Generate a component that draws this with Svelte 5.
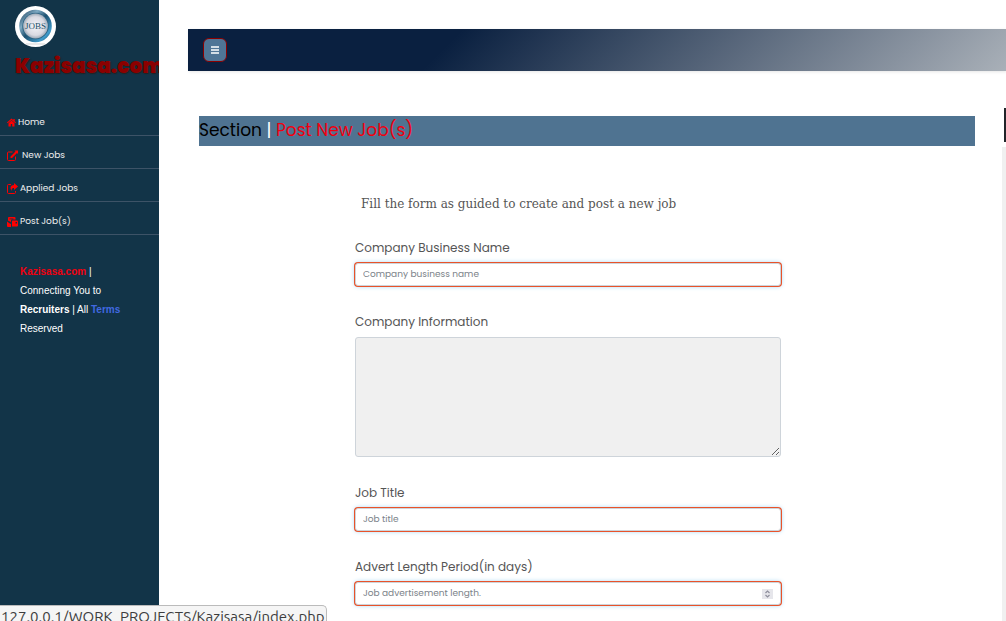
<script>
  const links = [
    { icon: 'home', label: 'Home', gap: 2 },
    { icon: 'edit', label: 'New Jobs', gap: 4 },
    { icon: 'share', label: 'Applied Jobs', gap: 2 },
    { icon: 'mail', label: 'Post Job(s)', gap: 2 }
  ];
</script>

<div class="shell">
  <aside class="sidebar">
    <div class="brand">
      <svg class="logo" viewBox="0 0 41 41" role="img" aria-label="Jobs">
        <defs>
          <linearGradient id="ring" x1="0" y1="0" x2="1" y2="1">
            <stop offset="0" stop-color="#12344f" />
            <stop offset=".3" stop-color="#7fabc4" />
            <stop offset=".5" stop-color="#1d506f" />
            <stop offset=".8" stop-color="#3f9bcb" />
            <stop offset="1" stop-color="#0e3650" />
          </linearGradient>
          <radialGradient id="face">
            <stop offset="0" stop-color="#f4f4f8" />
            <stop offset=".75" stop-color="#d9dae2" />
            <stop offset="1" stop-color="#9eabb9" />
          </radialGradient>
        </defs>
        <circle cx="20.5" cy="20.5" r="20.5" fill="#fff" />
        <path d="M11 38h19" stroke="#d5d5d5" />
        <circle cx="20.5" cy="20" r="16.3" fill="url(#ring)" />
        <circle cx="20.5" cy="20" r="13.2" fill="#286080" />
        <circle cx="20.5" cy="20" r="12.4" fill="url(#face)" />
        <text x="20.5" y="23" text-anchor="middle">JOBS</text>
      </svg>
      <h1>Kazisasa.com</h1>
    </div>

    <nav>
      {#each links as link}
        <a href="#{link.icon}" style="gap: {link.gap}px">
          {#if link.icon === 'home'}
            <svg width="9" height="9" viewBox="0 0 18 18"><path d="M9 1 0 9l1.300 1.500L9 3.800l7.700 6.700L18 9l-2.600-2.300V2h-2.700v2.300zM9 5.200l-6 5.200V17h4.600v-5h2.800v5H15v-6.600z" /></svg>
          {:else if link.icon === 'edit'}
            <svg width="11" height="11" viewBox="0 0 22 22"><path d="M11 4H3Q1 4 1 6v13q0 2 2 2h12q2 0 2-2v-6" fill="none" stroke="#f00" stroke-width="2" /><path d="M7 13 17 3l-2-2h7v7l-2-2-10 10H7z" /></svg>
          {:else if link.icon === 'share'}
            <svg width="11" height="11" viewBox="0 0 22 22"><path d="M8 3H3Q1 3 1 5v14q0 2 2 2h12q2 0 2-2v-3" fill="none" stroke="#f00" stroke-width="2" /><path d="M14 0l8 7-8 7v-4q-5-1-5 6-6-11 5-12z" /></svg>
          {:else}
            <svg width="11" height="10" viewBox="0 0 22 20"><path d="M4 0h11q2 0 2 2v3H10q-2 0-2 2v3L2 7V1zM0 9l7 5 1-1v7H2q-2 0-2-2zM11 7h9q2 0 2 2v8q0 2-2 2H10V8zM5 3v1.500h8V3zm12 7v3h3v-3z" fill-rule="evenodd" /></svg>
          {/if}
          <span>{link.label}</span>
        </a>
      {/each}
    </nav>

    <p class="about">
      <b class="site">Kazisasa.com</b> |<br />
      Connecting You to<br />
      <b>Recruiters</b> | All <a href="#terms">Terms</a><br />
      Reserved
    </p>
  </aside>

  <main>
    <header class="topbar">
      <button type="button" aria-label="Toggle sidebar">
        <svg width="8" height="8" viewBox="0 0 8 8"><path d="M0 1h8M0 4h8M0 7h8" stroke="#fff" stroke-width="1.300" /></svg>
      </button>
    </header>

    <div class="body">
      <section>
        <h2>Section <span class="bar">|</span> <span class="current">Post New Job(s)</span></h2>
        <form>
          <p class="intro">Fill the form as guided to create and post a new job</p>
          <div class="field">
            <label for="company">Company Business Name</label>
            <input id="company" type="text" placeholder="Company business name" />
          </div>
          <div class="field">
            <label for="info">Company Information</label>
            <textarea id="info"></textarea>
          </div>
          <div class="field">
            <label for="title">Job Title</label>
            <input id="title" type="text" placeholder="Job title" />
          </div>
          <div class="field">
            <label for="days">Advert Length Period(in days)</label>
            <div class="number">
              <input id="days" type="number" placeholder="Job advertisement length." />
              <svg class="spin" width="11" height="10" viewBox="0 0 11 10"><path d="M0 0h11v10H0z" fill="#e6e6eb" /><path d="M3.500 4l2-2 2 2M3.500 6l2 2 2-2" fill="none" stroke="#8f8f9d" stroke-width="1.200" /></svg>
            </div>
          </div>
        </form>
      </section>
      <div class="edge"><i class="dark"></i><i class="light"></i></div>
    </div>
  </main>
</div>

<div class="status">127.0.0.1/WORK_PROJECTS/Kazisasa/index.php</div>

<style>
  :global(body) {
    margin: 0;
    background: #fff;
  }
  * {
    box-sizing: border-box;
  }
  .shell {
    display: flex;
    height: 100vh;
    overflow: hidden;
    font-family: Poppins, Inter, sans-serif;
    color: #555;
  }
  .sidebar {
    flex: 0 0 159px;
    overflow: hidden;
    background: #123448;
    color: #fff;
  }
  .brand {
    height: 103px;
    padding: 6px 0 0 15px;
  }
  .logo {
    display: block;
    width: 41px;
    height: 41px;
  }
  .logo text {
    font: 9px "Liberation Serif", serif;
    fill: #1d5069;
  }
  h1 {
    margin: 4px 0 0;
    font-size: 20px;
    line-height: 30px;
    font-weight: 900;
    color: #8b0000;
    text-shadow: 1px 1px 1px #222;
    white-space: nowrap;
  }
  nav a {
    display: flex;
    align-items: center;
    height: 33px;
    padding: 7px 7px 0;
    border-bottom: 1px solid #3d5367;
    color: #eee;
    font-size: 9px;
    text-decoration: none;
  }
  nav svg {
    fill: #f00;
  }
  .about {
    margin: 27px 20px;
    font: 10px/19px "Liberation Sans", sans-serif;
    white-space: nowrap;
  }
  .about .site {
    color: #f00010;
  }
  .about a {
    color: #4169e1;
    font-weight: bold;
    text-decoration: none;
  }
  main {
    flex: 1;
    min-width: 0;
    padding: 29px 0 0 29px;
  }
  .topbar {
    display: flex;
    align-items: center;
    height: 42px;
    padding-left: 15px;
    background: linear-gradient(135deg, #0a2040 0%, #0a2040 32%, #a9b0b8 100%);
    box-shadow: 1px 1px 3px rgba(0, 0, 0, 0.1);
  }
  .topbar button {
    display: grid;
    place-items: center;
    width: 24px;
    height: 24px;
    padding: 0;
    border: 1px solid #8b0000;
    border-radius: 6px;
    background: #4f7596;
  }
  .body {
    display: flex;
    gap: 27px;
    padding: 37px 0 0 11px;
  }
  section {
    flex: 1;
    padding-top: 8px;
  }
  h2 {
    margin: 0;
    height: 30px;
    background: #4f7391;
    color: #000;
    font-size: 17px;
    line-height: 28px;
    font-weight: 400;
  }
  .bar {
    color: #fff;
  }
  .current {
    color: #f00010;
  }
  form {
    max-width: 426px;
    margin: 48px 25% 0 auto;
  }
  .intro {
    margin: 0 0 24px;
    padding-left: 6px;
    font: 12px/20px "DejaVu Serif", serif;
    white-space: nowrap;
  }
  .field {
    margin-bottom: 26px;
  }
  label {
    display: block;
    margin-bottom: 5px;
    font-size: 12px;
    line-height: 20px;
  }
  input,
  textarea {
    display: block;
    width: 100%;
    border: 1px solid #ced4da;
    border-radius: 3px;
    font: 9px Poppins, Inter, sans-serif;
    color: #495057;
  }
  input {
    height: 23px;
    padding: 0 7px;
    background: #fff;
    box-shadow: 0 0 0 1px #e9532a, 0 0 5px #8ccaf0;
    appearance: textfield;
  }
  input::placeholder {
    color: #7b8289;
    opacity: 1;
  }
  textarea {
    height: 120px;
    background: #f0f0f0;
    resize: vertical;
  }
  input::-webkit-inner-spin-button {
    appearance: none;
  }
  .number {
    position: relative;
  }
  .spin {
    position: absolute;
    right: 8px;
    top: 7px;
  }
  .edge {
    display: flex;
    flex-direction: column;
    gap: 5px;
    width: 4px;
    height: 100vh;
  }
  .dark {
    align-self: flex-end;
    width: 2px;
    height: 34px;
    background: #212529;
  }
  .light {
    flex: 1;
    background: #f0f0f0;
  }
  .status {
    position: fixed;
    left: 0;
    bottom: 0;
    height: 16px;
    padding: 0 1px;
    overflow: hidden;
    border: 1px solid #bbb;
    border-width: 1px 1px 0 0;
    border-radius: 0 5px 0 0;
    background: #f5f5f5;
    color: #3d3d3d;
    font: 15px/22px Ubuntu, "Open Sans", sans-serif;
    white-space: nowrap;
  }
</style>
